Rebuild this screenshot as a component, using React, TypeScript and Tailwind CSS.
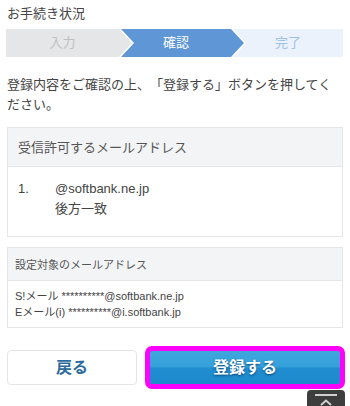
import React from 'react';

const FONT = "font-['Liberation_Sans','Noto_Sans_CJK_JP',sans-serif]";

function Stepper() {
  return (
    <div className="flex h-[28px] bg-white">
      <div className="w-[126px] shrink-0 bg-[#e5e6e8] text-[#bcc0c5] flex items-center justify-center pr-[13px] text-[13px] [clip-path:polygon(0_0,calc(100%_-_13px)_0,100%_50%,calc(100%_-_13px)_100%,0_100%)]">
        入力
      </div>
      <div className="w-[123px] shrink-0 -ml-[11px] bg-[#5e96d6] text-white flex items-center justify-center pr-[13px] text-[13px] [clip-path:polygon(0_0,calc(100%_-_13px)_0,100%_50%,calc(100%_-_13px)_100%,0_100%,13px_50%)]">
        確認
      </div>
      <div className="flex-1 -ml-[11px] bg-[#ebf2fb] text-[#9ebfe6] flex items-center justify-center text-[13px] [clip-path:polygon(0_0,100%_0,100%_100%,0_100%,13px_50%)]">
        完了
      </div>
    </div>
  );
}

export default function App() {
  return (
    <div className={`relative w-[350px] h-[406px] overflow-hidden bg-white text-[#333] [text-spacing-trim:space-all] ${FONT}`}>
      <div className="px-[7px] pt-[5px]">
        <h1 className="text-[13px] leading-[18px] text-[#444] font-normal">お手続き状況</h1>

        <div className="mt-[6px] -ml-px">
          <Stepper />
        </div>

        <p className="mt-[18px] text-[13px] leading-[20px] text-[#444]">
          登録内容をご確認の上、「登録する」ボタンを押してください。
        </p>

        {/* 受信許可するメールアドレス */}
        <div className="mt-[12px] border border-[#e4e6e9]">
          <div className="h-[39px] bg-[#f3f4f6] border-b border-[#e4e6e9] flex items-center pt-px px-[10px] text-[13px] text-[#555]">
            受信許可するメールアドレス
          </div>
          <div className="flex px-[10px] pt-[12px] pb-[17px] text-[13px] leading-[20px] text-[#444]">
            <span className="w-[37px]">1.</span>
            <div>
              <div>@softbank.ne.jp</div>
              <div>後方一致</div>
            </div>
          </div>
        </div>

        {/* 設定対象のメールアドレス */}
        <div className="mt-[10px] border border-[#e4e6e9]">
          <div className="h-[33px] bg-[#f3f4f6] border-b border-[#e4e6e9] flex items-center pt-[3px] px-[7px] text-[11px] text-[#555]">
            設定対象のメールアドレス
          </div>
          <div className="px-[7px] pt-[7px] pb-[7px] text-[11px] leading-[16px] text-[#444]">
            <div>S!メール **********@softbank.ne.jp</div>
            <div>Eメール(i) **********@i.softbank.jp</div>
          </div>
        </div>

        <div className="mt-[18px] flex items-center gap-[8px]">
          <button className="w-[130px] h-[35px] rounded-[4px] border border-[#e3e5e8] bg-white text-[16px] font-bold text-[#2d6a9c]">
            戻る
          </button>
          <div className="flex-1 -mr-[2px] rounded-[7px] border-[5px] border-[#ff00ff] bg-[#ff00ff]">
            <button className="w-full h-[33px] rounded-[2px] text-[16px] font-bold text-white [text-shadow:0_1px_2px_rgba(0,40,80,0.7)] bg-[linear-gradient(#3fa6dc_0%,#34a0da_48%,#1f8dcf_52%,#1c8acd_100%)]">
              登録する
            </button>
          </div>
        </div>
      </div>

      {/* page top button */}
      <div className="absolute right-[5px] bottom-0 w-[38px] h-[16px] rounded-t-[4px] bg-[#3d3d3d] flex flex-col items-center pt-[4px]">
        <div className="w-[22px] h-[2px] bg-[#cfcfcf]" />
        <svg width="12" height="7" viewBox="0 0 12 7" className="mt-[3px]">
          <path d="M1 6 L6 1.5 L11 6" stroke="#cfcfcf" strokeWidth="2" fill="none" />
        </svg>
      </div>
    </div>
  );
}
